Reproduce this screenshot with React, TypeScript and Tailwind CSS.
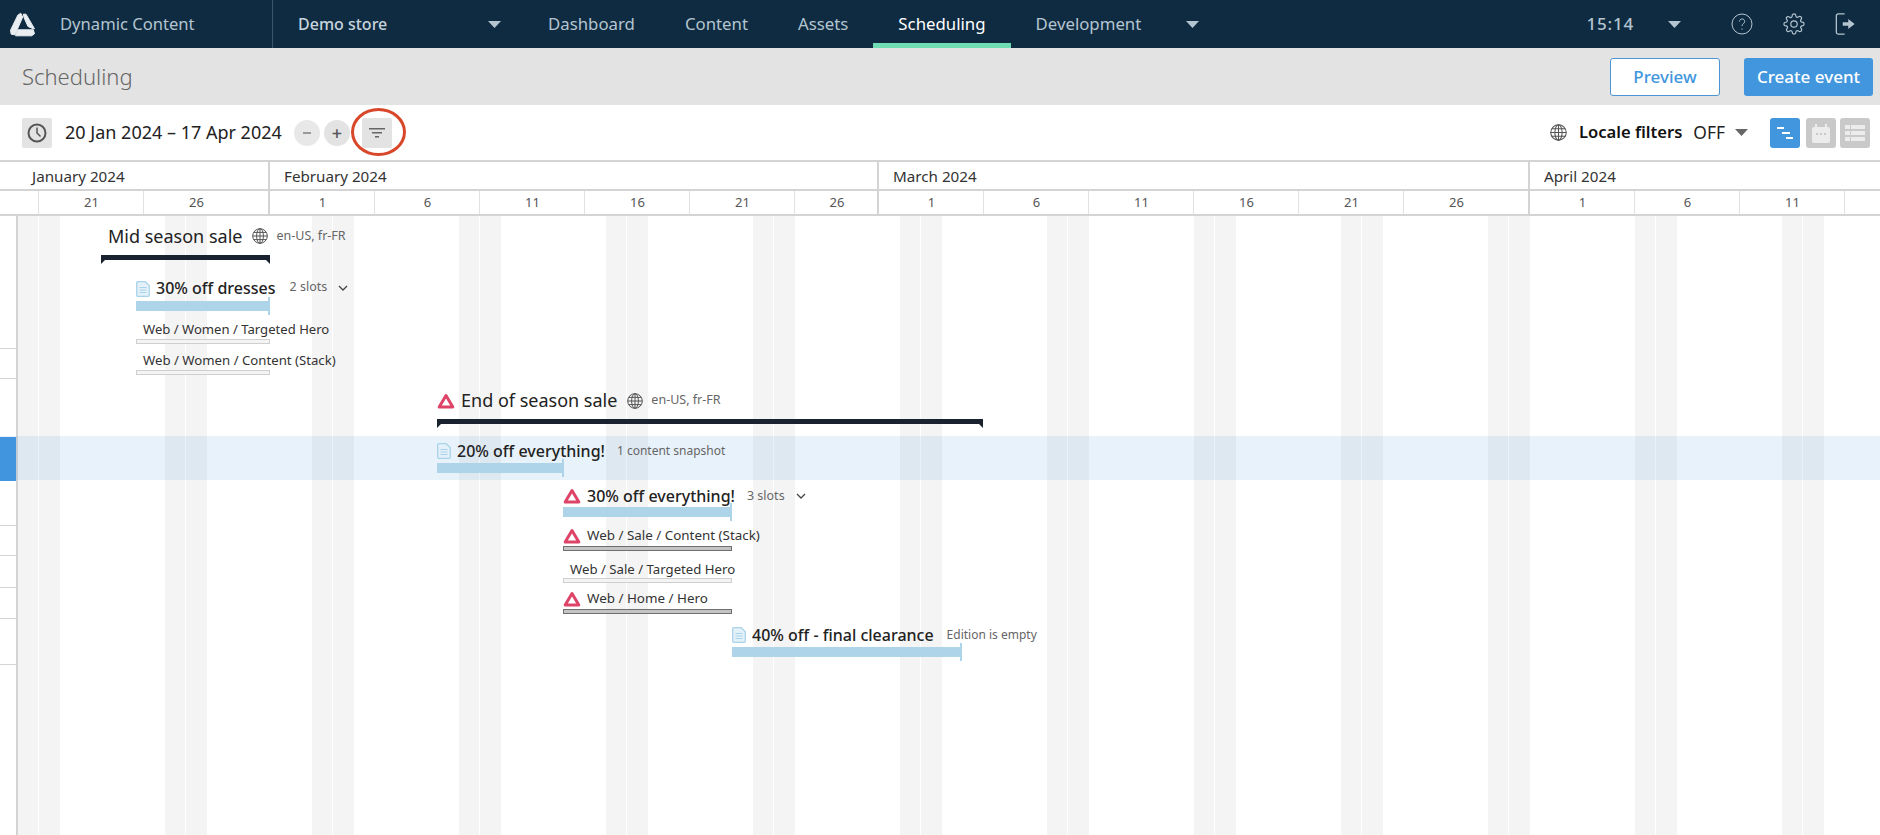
const font = "font-['Noto_Sans',sans-serif]";

const DAY = 21;
const ORIGIN = 18;
const x = (d: number) => ORIGIN + d * DAY;

const weekendStarts = Array.from({ length: 13 }, (_, i) => i * 7);

const months = [
  { label: 'January 2024', width: 252 },
  { label: 'February 2024', width: 609 },
  { label: 'March 2024', width: 651 },
  { label: 'April 2024', width: 360 },
];

const dayCells = [
  { label: '', width: 21 },
  { label: '21', width: 105 },
  { label: '26', width: 126, month: true },
  { label: '1', width: 105 },
  { label: '6', width: 105 },
  { label: '11', width: 105 },
  { label: '16', width: 105 },
  { label: '21', width: 105 },
  { label: '26', width: 84, month: true },
  { label: '1', width: 105 },
  { label: '6', width: 105 },
  { label: '11', width: 105 },
  { label: '16', width: 105 },
  { label: '21', width: 105 },
  { label: '26', width: 126, month: true },
  { label: '1', width: 105 },
  { label: '6', width: 105 },
  { label: '11', width: 105 },
  { label: '', width: 105 },
];

function Caret() {
  return (
    <svg width="13" height="7" viewBox="0 0 13 7">
      <path d="M0 0h13L6.5 7z" fill="currentColor" />
    </svg>
  );
}

function Logo() {
  return (
    <svg width="26" height="25" viewBox="0 0 26 25" fill="#e9eef2" stroke="#e9eef2" strokeWidth="1" strokeLinejoin="round">
      <path d="M7.800 3.200 10.700 1.200 12.700 5 5 22.800 1.200 22.200.5 18.300z" />
      <path d="M13.200 2.200H16L24.500 16.800H23.300L18 14.500 14.200 6z" />
      <path d="M7.800 17.800H23.300L24.500 21.700 21.700 23.800H5.500z" />
    </svg>
  );
}

function Globe({ size = 16 }: { size?: number }) {
  return (
    <svg width={size} height={size} viewBox="0 0 16 16" fill="none" stroke="#555" strokeWidth="1">
      <circle cx="8" cy="8" r="7.300" />
      <ellipse cx="8" cy="8" rx="3.400" ry="7.300" />
      <path d="M8 .7v14.600M.7 8h14.600M1.700 4.400h12.600M1.700 11.600h12.600" />
    </svg>
  );
}

function Warning() {
  return (
    <svg width="18" height="16" viewBox="0 0 18 16" fill="none" stroke="#de4468" strokeWidth="3" strokeLinejoin="round" className="shrink-0">
      <path d="M9 2.500 15.800 14H2.200z" />
    </svg>
  );
}

function Doc() {
  return (
    <svg width="14" height="16" viewBox="0 0 14 16" fill="none" className="shrink-0">
      <path d="M1.500.7h7.800l4 4v9.400a1.200 1.200 0 0 1-1.200 1.200H1.900a1.200 1.200 0 0 1-1.200-1.200V1.900A1.200 1.200 0 0 1 1.900.7z" fill="#e4f1f9" stroke="#a9d3ea" strokeWidth="1.300" />
      <path d="M3.500 6.500h7M3.500 9h7M3.500 11.500h7" stroke="#a9d3ea" />
    </svg>
  );
}

function Chevron() {
  return (
    <svg width="10" height="6" viewBox="0 0 10 6" fill="none" stroke="#444" strokeWidth="1.300">
      <path d="M1 1l4 4 4-4" />
    </svg>
  );
}

// blue bar of an edition, with the small cap at its end
function EditionBar({ width }: { width: number }) {
  return (
    <div className="relative h-[10px] bg-[#aed4ea]" style={{ width }}>
      <div className="absolute right-0 top-[-4px] h-[18px] w-[2px] bg-[#aed4ea]" />
    </div>
  );
}

function EventBar({ width }: { width: number }) {
  return (
    <div className="relative h-[5px] bg-[#1a2230]" style={{ width }}>
      <div className="absolute left-0 top-[5px] border-t-[4px] border-r-[4px] border-t-[#1a2230] border-r-transparent" />
      <div className="absolute right-0 top-[5px] border-t-[4px] border-l-[4px] border-t-[#1a2230] border-l-transparent" />
    </div>
  );
}

function SlotBar({ width, dark }: { width: number; dark?: boolean }) {
  return (
    <div
      className={
        dark
          ? 'h-[5px] border border-[#6f6f6f] bg-[#c4c4c4]'
          : 'h-[5px] border border-[#cfcfcf] bg-[#f4f4f4]'
      }
      style={{ width }}
    />
  );
}

function Timeline() {
  return (
    <div className="relative flex-1 overflow-hidden">
      {/* weekends */}
      <div className="absolute inset-y-0 left-0">
        {weekendStarts.map((d) => (
          <div key={d} className="absolute inset-y-0 flex gap-px" style={{ left: x(d) }}>
            <div className="w-[20px] bg-[#f4f4f4]" />
            <div className="w-[21px] bg-[#f4f4f4]" />
          </div>
        ))}
      </div>

      {/* gutter */}
      <div className="absolute inset-y-0 left-0 w-[18px] border-r-2 border-[#d4d4d4] bg-white">
        <div className="absolute left-0 top-[132px] h-[31px] w-full border-y border-[#d4d4d4]" />
        <div className="absolute left-0 top-[221px] h-[44px] w-full bg-[#4196de]" />
        <div className="absolute left-0 top-[309px] h-[31px] w-full border-y border-[#d4d4d4]" />
        <div className="absolute left-0 top-[371px] h-[32px] w-full border-y border-[#d4d4d4]" />
        <div className="absolute left-0 top-[448px] h-px w-full bg-[#d4d4d4]" />
      </div>

      <div className="relative">
        {/* Mid season sale */}
        <div className="ml-[101px] pt-[5px] pb-[4px]">
          <div className="flex h-[30px] items-center pl-[7px]">
            <span className="text-[18px] text-[#222]">Mid season sale</span>
            <span className="ml-[10px]"><Globe /></span>
            <span className="ml-[8px] text-[12.5px] text-[#666]">en-US, fr-FR</span>
          </div>
        </div>
        <div className="ml-[101px]"><EventBar width={169} /></div>

        <div className="ml-[136px] mt-[21px] flex h-[16px] items-center">
          <Doc />
          <span className="mb-[3px] ml-[6px] text-[16px] font-medium text-[#222]">30% off dresses</span>
          <span className="mb-[3px] ml-[14px] text-[12.5px] text-[#666]">2 slots</span>
          <span className="mb-[3px] ml-[11px]"><Chevron /></span>
        </div>
        <div className="ml-[136px] mt-[4px]"><EditionBar width={134} /></div>

        <div className="ml-[143px] mt-[10px] h-[18px] text-[13.1px] leading-[17px] whitespace-nowrap text-[#333]">Web / Women / Targeted Hero</div>
        <div className="ml-[136px]"><SlotBar width={134} /></div>
        <div className="ml-[143px] mt-[8px] h-[18px] text-[13.2px] leading-[17px] whitespace-nowrap text-[#333]">Web / Women / Content (Stack)</div>
        <div className="ml-[136px]"><SlotBar width={134} /></div>

        {/* End of season sale */}
        <div className="ml-[437px] mt-[13px] flex h-[31px] items-center pb-[6px]">
          <Warning />
          <span className="ml-[6px] text-[18px] text-[#222]">End of season sale</span>
          <span className="ml-[10px]"><Globe /></span>
          <span className="ml-[8px] text-[12.5px] text-[#666]">en-US, fr-FR</span>
        </div>
        <div className="ml-[437px]"><EventBar width={546} /></div>

        {/* selected row */}
        <div className="mt-[12px] h-[44px] bg-[#4196de]/12 pl-[437px] pt-[6px]">
          <div className="flex h-[17px] items-center">
            <Doc />
            <span className="ml-[6px] text-[16px] font-medium text-[#222]">20% off everything!</span>
            <span className="ml-[12px] text-[12px] text-[#666]">1 content snapshot</span>
          </div>
          <div className="mt-[4px]"><EditionBar width={127} /></div>
        </div>

        <div className="ml-[563px] mt-[8px] flex h-[17px] items-center pb-[1px]">
          <Warning />
          <span className="ml-[6px] text-[16px] font-medium text-[#222]">30% off everything!</span>
          <span className="ml-[12px] text-[12.5px] text-[#666]">3 slots</span>
          <span className="ml-[11px]"><Chevron /></span>
        </div>
        <div className="ml-[563px] mt-[2px]"><EditionBar width={169} /></div>

        <div className="ml-[563px] mt-[10px] flex h-[19px] items-center pb-[2px]">
          <Warning />
          <span className="ml-[6px] text-[13.4px] whitespace-nowrap text-[#333]">Web / Sale / Content (Stack)</span>
        </div>
        <div className="ml-[563px]"><SlotBar width={169} dark /></div>
        <div className="ml-[570px] mt-[9px] h-[18px] text-[13.2px] leading-[18px] whitespace-nowrap text-[#333]">Web / Sale / Targeted Hero</div>
        <div className="ml-[563px]"><SlotBar width={169} /></div>
        <div className="ml-[563px] mt-[8px] flex h-[18px] items-center pb-[3px]">
          <Warning />
          <span className="ml-[6px] text-[13.4px] whitespace-nowrap text-[#333]">Web / Home / Hero</span>
        </div>
        <div className="ml-[563px]"><SlotBar width={169} dark /></div>

        <div className="ml-[732px] mt-[13px] flex h-[16px] items-center">
          <Doc />
          <span className="mb-[1px] ml-[6px] text-[16px] font-medium text-[#222]">40% off - final clearance</span>
          <span className="mb-[1px] ml-[13px] text-[12px] text-[#666]">Edition is empty</span>
        </div>
        <div className="ml-[732px] mt-[4px]"><EditionBar width={230} /></div>
      </div>
    </div>
  );
}

export default function App() {
  return (
    <div className={`flex h-[835px] w-[1880px] flex-col overflow-hidden bg-white ${font}`}>
      {/* Top nav */}
      <div className="flex h-12 shrink-0 items-stretch bg-[#0f2b42] text-[16.8px] text-[#b4c5d0]">
        <div className="flex w-[273px] items-center border-r border-[#3b5468] pl-[10px]">
          <Logo />
          <span className="ml-[24px] text-[16.6px]">Dynamic Content</span>
        </div>
        <div className="flex w-[250px] items-center justify-between pl-[25px] pr-[22px]">
          <span className="text-[16px] font-medium text-[#c7d4dd]">Demo store</span>
          <Caret />
        </div>
        <div className="flex items-center px-[25px]">Dashboard</div>
        <div className="flex items-center px-[25px]">Content</div>
        <div className="flex items-center px-[25px]">Assets</div>
        <div className="flex items-center border-b-[5px] border-[#6fdcb4] px-[25px] pt-[5px] text-white">Scheduling</div>
        <div className="flex items-center px-[25px]">Development</div>
        <div className="flex items-center pl-[20px]"><Caret /></div>
        <div className="ml-auto flex items-center pr-[24px]">
          <span className="text-[17px] font-medium tracking-[0.8px]">15:14</span>
          <span className="ml-[34px]"><Caret /></span>
          <svg width="22" height="22" viewBox="0 0 22 22" fill="none" stroke="currentColor" className="ml-[50px]">
            <circle cx="11" cy="11" r="10" />
            <path d="M8.500 8.500c0-3.400 5.200-3.400 5.200 0 0 2.200-2.700 2-2.700 4.500M11 15.500v1.200" />
          </svg>
          <svg width="22" height="24" viewBox="0 0 24 24" fill="none" stroke="currentColor" strokeWidth="1.300" className="ml-[30px]">
            <circle cx="12" cy="12" r="3.500" />
            <path d="M19.400 15a1.650 1.650 0 0 0 .33 1.820l.06.06a2 2 0 1 1-2.830 2.830l-.06-.06a1.650 1.650 0 0 0-2.820 1.170V21a2 2 0 1 1-4 0v-.09a1.650 1.650 0 0 0-2.800-1.170l-.06.06a2 2 0 1 1-2.830-2.830l.06-.06a1.650 1.650 0 0 0-1.170-2.820H3a2 2 0 1 1 0-4h.09a1.650 1.650 0 0 0 1.170-2.800l-.06-.06a2 2 0 1 1 2.830-2.830l.06.06a1.650 1.650 0 0 0 1.820.33h.09A1.650 1.650 0 0 0 10 3.090V3a2 2 0 1 1 4 0v.09a1.650 1.650 0 0 0 2.800 1.170l.06-.06a2 2 0 1 1 2.830 2.830l-.06.06a1.650 1.650 0 0 0-.33 1.820v.09a1.650 1.650 0 0 0 1.510 1H21a2 2 0 1 1 0 4h-.09a1.650 1.650 0 0 0-1.510 1z" />
          </svg>
          <svg width="21" height="22" viewBox="0 0 22 24" fill="none" stroke="currentColor" strokeWidth="1.400" className="ml-[30px]">
            <path d="M10 1H3a2 2 0 0 0-2 2v18a2 2 0 0 0 2 2h7" />
            <path d="M8 10h6V6.500l7 5.500-7 5.500V14H8z" fill="currentColor" stroke="none" />
          </svg>
        </div>
      </div>

      {/* Title bar */}
      <div className="flex h-[57px] shrink-0 items-center bg-[#e3e3e3] pl-[22px] pr-[7px]">
        <span className="text-[22px] font-light text-[#666]">Scheduling</span>
        <button className="ml-auto h-[38px] w-[110px] rounded-[3px] border border-[#4d94d3] bg-white text-[17px] font-medium text-[#4196de]">Preview</button>
        <button className="ml-[24px] h-[38px] w-[129px] rounded-[3px] bg-[#4196de] text-[17px] font-medium text-white">Create event</button>
      </div>

      {/* Toolbar */}
      <div className="flex h-[55px] shrink-0 items-center pl-[22px] pr-[10px]">
        <div className="flex size-[30px] items-center justify-center rounded-[2px] bg-[#e3e3e3]">
          <svg width="20" height="20" viewBox="0 0 20 20" fill="none" stroke="#555" strokeWidth="2">
            <circle cx="10" cy="10" r="8.500" />
            <path d="M10 4.500V10l3.500 3.500" strokeWidth="1.500" />
          </svg>
        </div>
        <span className="ml-[13px] text-[18px] text-[#222]">20 Jan 2024 – 17 Apr 2024</span>
        <div className="ml-[12px] flex size-[26px] items-center justify-center rounded-full bg-[#e8e8e8]">
          <div className="h-[2px] w-[8px] bg-[#999]" />
        </div>
        <div className="ml-[4px] flex size-[26px] items-center justify-center rounded-full bg-[#e3e3e3] text-[18px] font-medium leading-none text-[#555]">+</div>
        <div className="relative ml-[12px] flex size-[30px] items-center justify-center rounded-[2px] bg-[#e3e3e3]">
          <svg width="16" height="10" viewBox="0 0 16 10" fill="#666">
            <path d="M0 0h16v1.500H0zM3 4h10v1.500H3zM6 8h4v1.500H6z" />
          </svg>
          <div className="absolute left-[-11px] top-[-10px] h-[48px] w-[55px] rounded-[50%] border-[3.5px] border-[#d9472b]" />
        </div>
        <div className="ml-auto flex items-center">
          <Globe size={17} />
          <span className="ml-[12px] text-[16.6px] font-semibold text-[#111]">Locale filters</span>
          <span className="ml-[11px] text-[17.4px] text-[#222]">OFF</span>
          <span className="ml-[10px] text-[#666]"><Caret /></span>
          <div className="ml-[22px] flex h-[30px] w-[30px] items-center justify-center rounded-[3px] bg-[#4196de]">
            <svg width="18" height="14" viewBox="0 0 18 14" fill="#fff">
              <path d="M1 1h7v2H1zM6 6h8v2H6zM10 11h7v2h-7z" />
            </svg>
          </div>
          <div className="ml-[6px] flex h-[30px] w-[30px] items-center justify-center rounded-[3px] bg-[#c9c9c9]">
            <svg width="18" height="20" viewBox="0 0 18 20" fill="#ececec">
              <path d="M3 4V1h2v3h8V1h2v3h1a2 2 0 0 1 2 2v12a2 2 0 0 1-2 2H2a2 2 0 0 1-2-2V6a2 2 0 0 1 2-2z" />
              <path d="M4 10h2v2H4zM8 10h2v2H8zM12 10h2v2h-2z" fill="#c9c9c9" />
            </svg>
          </div>
          <div className="ml-[4px] flex h-[30px] w-[30px] items-center justify-center rounded-[3px] bg-[#c9c9c9]">
            <svg width="20" height="16" viewBox="0 0 20 16" fill="#ececec">
              <path d="M0 0h5v4H0zM6 0h14v4H6zM0 6h5v4H0zM6 6h14v4H6zM0 12h5v4H0zM6 12h14v4H6z" />
            </svg>
          </div>
        </div>
      </div>

      {/* Month and day header */}
      <div className="shrink-0">
        <div className="flex h-[31px] border-y-2 border-[#d4d4d4] pl-[18px]">
          {months.map((m) => (
            <div key={m.label} className="flex shrink-0 items-center border-r-2 border-[#d4d4d4] pl-[14px] pt-px text-[15.2px] text-[#333] last:border-r-0" style={{ width: m.width }}>
              {m.label}
            </div>
          ))}
        </div>
        <div className="flex h-[25px] border-b-2 border-[#d4d4d4] pl-[18px]">
          {dayCells.map((c, i) => (
            <div
              key={i}
              className={c.month ? 'flex shrink-0 items-center border-r-2 border-[#d4d4d4]' : 'flex shrink-0 items-center border-r border-[#e2e2e2]'}
              style={{ width: c.width }}
            >
              <span className="w-[105px] shrink-0 text-center text-[13px] text-[#555]" style={c.width < 105 ? { width: c.width } : undefined}>{c.label}</span>
            </div>
          ))}
        </div>
      </div>

      <Timeline />
    </div>
  );
}
